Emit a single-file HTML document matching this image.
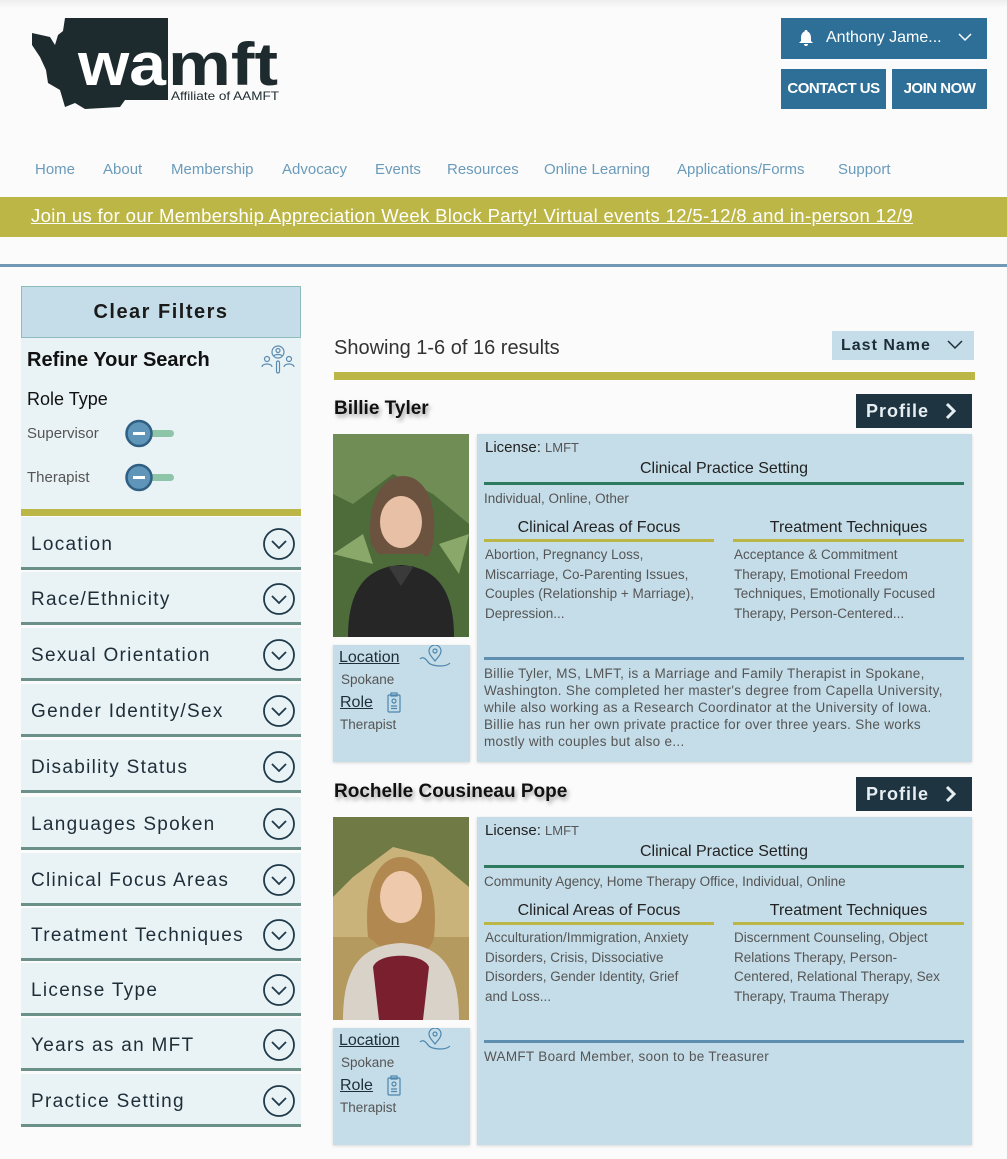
<!DOCTYPE html>
<html><head><meta charset="utf-8"><style>
*{margin:0;padding:0;box-sizing:border-box}
body{width:1007px;height:1159px;background:#fbfbfb;font-family:"Liberation Sans",sans-serif;position:relative;overflow:hidden;color:#222}
.a{position:absolute;white-space:nowrap}
.nav{color:#6a9bbb;font-size:15px;top:161px}
.acc{position:absolute;left:21px;width:280px;height:53px;background:#e9f2f5;border-bottom:3px solid #6b9088}
.acc span{position:absolute;left:10px;top:17px;font-size:19px;letter-spacing:1.3px;color:#1e2e38}
.acc svg{position:absolute;left:241px;top:10px}
.panel{position:absolute;background:#c5dde8;box-shadow:0 1px 3px rgba(0,0,0,.15)}
.sm{font-size:13.5px;color:#555;line-height:19.6px}
.bio{font-size:13.5px;color:#555;line-height:17px;letter-spacing:.3px}
.h{font-size:16px;color:#222}
.prof{position:absolute;left:856px;width:116px;height:34px;background:#1f3441;color:#e6eef2;font-weight:bold;font-size:18px;letter-spacing:1px;padding:7px 0 0 10px}
.name{position:absolute;left:334px;font-size:19px;font-weight:bold;color:#111;text-shadow:2px 3px 4px rgba(0,0,0,.35)}
.lnk{text-decoration:underline;font-size:16px;color:#1e2e38}
</style></head><body>
<div class="a" style="left:0;top:0;width:1007px;height:8px;background:linear-gradient(#eee,#fbfbfb)"></div>
<svg class="a" style="left:30px;top:15px" width="260" height="97" viewBox="0 0 260 97">
<path d="M35 3 L138 3 L138 85 L95 85 L90 92 L55 94 L45 88 L35 92 L30 75 L18 68 L16 55 L10 42 L2 30 L2 18 L20 22 L25 30 L28 20 L33 16 Z" fill="#1d2a2e"/>
<text x="48" y="70" font-family="Liberation Sans" font-weight="bold" font-size="60" fill="#fff" textLength="88" lengthAdjust="spacingAndGlyphs">wa</text>
<text x="138" y="70" font-family="Liberation Sans" font-weight="bold" font-size="60" fill="#1d2a2e" textLength="110" lengthAdjust="spacingAndGlyphs">mft</text>
<text x="141" y="85" font-family="Liberation Sans" font-size="12" fill="#1d2a2e" textLength="108" lengthAdjust="spacingAndGlyphs">Affiliate of AAMFT</text>
</svg>
<div class="a" style="left:781px;top:18px;width:206px;height:41px;background:#2e6f97;color:#fff;font-size:16px;padding:11px 0 0 45px">Anthony Jame...</div>
<svg class="a" style="left:796px;top:28px" width="20" height="20" viewBox="0 0 20 20"><path d="M10 2a1.5 1.5 0 0 1 1.5 1.5C14 4.5 15 7 15 10v3l2 2H3l2-2v-3c0-3 1-5.5 3.5-6.5A1.5 1.5 0 0 1 10 2z M8 16h4a2 2 0 0 1-4 0z" fill="#fff"/></svg>
<svg class="a" style="left:957px;top:31px" width="16" height="12"><path d="M2 3l6 6 6-6" stroke="#fff" stroke-width="1.5" fill="none"/></svg>
<div class="a" style="left:781px;top:69px;width:105px;height:40px;background:#2e6f97;color:#fff;font-size:15px;font-weight:bold;text-align:center;line-height:40px;letter-spacing:-.5px">CONTACT US</div>
<div class="a" style="left:892px;top:69px;width:95px;height:40px;background:#2e6f97;color:#fff;font-size:15px;font-weight:bold;text-align:center;line-height:40px;letter-spacing:-.5px">JOIN NOW</div>
<div class="a nav" style="left:35px">Home</div>
<div class="a nav" style="left:103px">About</div>
<div class="a nav" style="left:171px">Membership</div>
<div class="a nav" style="left:282px">Advocacy</div>
<div class="a nav" style="left:375px">Events</div>
<div class="a nav" style="left:447px">Resources</div>
<div class="a nav" style="left:544px">Online Learning</div>
<div class="a nav" style="left:677px">Applications/Forms</div>
<div class="a nav" style="left:838px">Support</div>
<div class="a" style="left:0;top:197px;width:1007px;height:40px;background:#bcb646"></div>
<div class="a" style="left:31px;top:205px;color:#fff;font-size:18.5px;text-decoration:underline;letter-spacing:.35px">Join us for our Membership Appreciation Week Block Party! Virtual events 12/5-12/8 and in-person 12/9</div>
<div class="a" style="left:0;top:264px;width:1007px;height:3px;background:#7199b6"></div>
<div class="a" style="left:21px;top:286px;width:280px;height:52px;background:#c5dde8;border:1px solid #8fbcbc;text-align:center;font-size:20px;font-weight:bold;letter-spacing:1.5px;line-height:50px;color:#1a1a1a">Clear Filters</div>
<div class="a" style="left:21px;top:338px;width:280px;height:172px;background:#e9f2f5"></div>
<div class="a" style="left:27px;top:349px;font-size:20px;font-weight:bold;color:#111">Refine Your Search</div>
<svg class="a" style="left:261px;top:344px" width="34" height="32" viewBox="0 0 34 32" fill="none" stroke="#5a8bb0" stroke-width="1.2"><circle cx="17" cy="8" r="6"/><circle cx="17" cy="6.5" r="2"/><path d="M13 12c1-2 7-2 8 0"/><circle cx="6" cy="15" r="2.5"/><path d="M1 23c0-4 10-4 10 0"/><circle cx="28" cy="15" r="2.5"/><path d="M23 23c0-4 10-4 10 0"/><rect x="15.5" y="17" width="3" height="12" rx="1.5"/></svg>
<div class="a" style="left:27px;top:389px;font-size:18px;color:#111">Role Type</div>
<div class="a" style="left:27px;top:425px;font-size:15px;color:#555">Supervisor</div>
<div class="a" style="left:27px;top:469px;font-size:15px;color:#555">Therapist</div>
<svg class="a" style="left:124px;top:419px" width="52" height="30"><rect x="14" y="11" width="36" height="7" rx="3.5" fill="#8ec4a7"/><circle cx="15" cy="14.5" r="12.5" fill="#5f95b8" stroke="#2f5f82" stroke-width="2.5"/><rect x="9" y="13" width="12" height="3" fill="#fff"/></svg>
<svg class="a" style="left:124px;top:463px" width="52" height="30"><rect x="14" y="11" width="36" height="7" rx="3.5" fill="#8ec4a7"/><circle cx="15" cy="14.5" r="12.5" fill="#5f95b8" stroke="#2f5f82" stroke-width="2.5"/><rect x="9" y="13" width="12" height="3" fill="#fff"/></svg>
<div class="a" style="left:21px;top:509px;width:280px;height:7px;background:#bcb646"></div>

<div class="acc" style="top:517px"><span>Location</span><svg width="34" height="34"><circle cx="17" cy="17" r="15" fill="none" stroke="#1f3a4a" stroke-width="1.8"/><path d="M10 14l7 7 7-7" fill="none" stroke="#1f3a4a" stroke-width="1.8"/></svg></div>
<div class="acc" style="top:572px"><span>Race/Ethnicity</span><svg width="34" height="34"><circle cx="17" cy="17" r="15" fill="none" stroke="#1f3a4a" stroke-width="1.8"/><path d="M10 14l7 7 7-7" fill="none" stroke="#1f3a4a" stroke-width="1.8"/></svg></div>
<div class="acc" style="top:628px"><span>Sexual Orientation</span><svg width="34" height="34"><circle cx="17" cy="17" r="15" fill="none" stroke="#1f3a4a" stroke-width="1.8"/><path d="M10 14l7 7 7-7" fill="none" stroke="#1f3a4a" stroke-width="1.8"/></svg></div>
<div class="acc" style="top:684px"><span>Gender Identity/Sex</span><svg width="34" height="34"><circle cx="17" cy="17" r="15" fill="none" stroke="#1f3a4a" stroke-width="1.8"/><path d="M10 14l7 7 7-7" fill="none" stroke="#1f3a4a" stroke-width="1.8"/></svg></div>
<div class="acc" style="top:740px"><span>Disability Status</span><svg width="34" height="34"><circle cx="17" cy="17" r="15" fill="none" stroke="#1f3a4a" stroke-width="1.8"/><path d="M10 14l7 7 7-7" fill="none" stroke="#1f3a4a" stroke-width="1.8"/></svg></div>
<div class="acc" style="top:797px"><span>Languages Spoken</span><svg width="34" height="34"><circle cx="17" cy="17" r="15" fill="none" stroke="#1f3a4a" stroke-width="1.8"/><path d="M10 14l7 7 7-7" fill="none" stroke="#1f3a4a" stroke-width="1.8"/></svg></div>
<div class="acc" style="top:853px"><span>Clinical Focus Areas</span><svg width="34" height="34"><circle cx="17" cy="17" r="15" fill="none" stroke="#1f3a4a" stroke-width="1.8"/><path d="M10 14l7 7 7-7" fill="none" stroke="#1f3a4a" stroke-width="1.8"/></svg></div>
<div class="acc" style="top:908px"><span>Treatment Techniques</span><svg width="34" height="34"><circle cx="17" cy="17" r="15" fill="none" stroke="#1f3a4a" stroke-width="1.8"/><path d="M10 14l7 7 7-7" fill="none" stroke="#1f3a4a" stroke-width="1.8"/></svg></div>
<div class="acc" style="top:963px"><span>License Type</span><svg width="34" height="34"><circle cx="17" cy="17" r="15" fill="none" stroke="#1f3a4a" stroke-width="1.8"/><path d="M10 14l7 7 7-7" fill="none" stroke="#1f3a4a" stroke-width="1.8"/></svg></div>
<div class="acc" style="top:1018px"><span>Years as an MFT</span><svg width="34" height="34"><circle cx="17" cy="17" r="15" fill="none" stroke="#1f3a4a" stroke-width="1.8"/><path d="M10 14l7 7 7-7" fill="none" stroke="#1f3a4a" stroke-width="1.8"/></svg></div>
<div class="acc" style="top:1074px"><span>Practice Setting</span><svg width="34" height="34"><circle cx="17" cy="17" r="15" fill="none" stroke="#1f3a4a" stroke-width="1.8"/><path d="M10 14l7 7 7-7" fill="none" stroke="#1f3a4a" stroke-width="1.8"/></svg></div>

<div class="a" style="left:334px;top:337px;font-size:20px;color:#333">Showing 1-6 of 16 results</div>
<div class="a" style="left:832px;top:331px;width:142px;height:29px;background:#c5dde8;font-size:16px;font-weight:bold;letter-spacing:1px;color:#1e2e38;padding:6px 0 0 9px">Last Name</div>
<svg class="a" style="left:946px;top:338px" width="18" height="14"><path d="M2 3l7 7 7-7" stroke="#1e2e38" stroke-width="1.5" fill="none"/></svg>
<div class="a" style="left:334px;top:372px;width:641px;height:8px;background:#bcb646"></div>

<div class="name" style="top:398px">Billie Tyler</div>
<div class="prof" style="top:394px">Profile</div>
<svg class="a" style="left:944px;top:402px" width="14" height="18"><path d="M3 2l7 7-7 7" stroke="#e6eef2" stroke-width="3" fill="none"/></svg>
<svg class="a" style="left:333px;top:434px" width="136" height="203" viewBox="0 0 136 203">
<rect width="136" height="203" fill="#4e6b3a"/><path d="M0 0h136v90L100 60 60 40 20 70 0 60z" fill="#6f8d55"/><path d="M0 120l30-20 10 30z M136 100l-30 10 20 30z" fill="#8aa86a"/>
<path d="M38 110c-5-40 10-68 32-68s36 28 30 68c-5 20-10 10-10 10H45z" fill="#6b5340"/>
<ellipse cx="68" cy="88" rx="21" ry="26" fill="#e8c0a5"/>
<path d="M15 203c0-50 20-70 53-72 33 2 53 22 53 72z" fill="#262626"/><path d="M55 132l13 20 13-20" fill="#3a3a3a"/>
</svg>
<div class="panel" style="left:333px;top:645px;width:137px;height:117px"></div>
<div class="a lnk" style="left:339px;top:649px">Location</div>
<svg class="a" style="left:418px;top:645px" width="34" height="24" fill="none" stroke="#4d86ad" stroke-width="1.2"><path d="M17 16c-4-5-6-7-6-10a6 6 0 0 1 12 0c0 3-2 5-6 10z"/><circle cx="17" cy="6" r="2"/><path d="M2 14c3-3 6 0 8 3s8 4 12 4 8-1 10-3"/></svg>
<div class="a sm" style="left:341px;top:670px">Spokane</div>
<div class="a lnk" style="left:340px;top:694px">Role</div>
<svg class="a" style="left:386px;top:692px" width="16" height="22" fill="none" stroke="#4d86ad" stroke-width="1.2"><rect x="2" y="3" width="12" height="17" rx="1"/><rect x="5" y="1" width="6" height="3"/><circle cx="8" cy="9" r="2"/><path d="M5 14h6M5 16.5h6"/></svg>
<div class="a sm" style="left:340px;top:715px">Therapist</div>
<div class="panel" style="left:477px;top:434px;width:495px;height:328px"></div>
<div class="a" style="left:485px;top:439px;font-size:15px;color:#222">License: <span style="font-size:13px;color:#555">LMFT</span></div>
<div class="a h" style="left:484px;width:480px;text-align:center;top:460px">Clinical Practice Setting</div>
<div class="a" style="left:484px;top:482px;width:480px;height:3px;background:#2e7a5e"></div>
<div class="a sm" style="left:484px;top:489px">Individual, Online, Other</div>
<div class="a h" style="left:484px;width:230px;text-align:center;top:519px">Clinical Areas of Focus</div>
<div class="a h" style="left:733px;width:231px;text-align:center;top:519px">Treatment Techniques</div>
<div class="a" style="left:484px;top:539px;width:230px;height:3px;background:#bcb646"></div>
<div class="a" style="left:733px;top:539px;width:231px;height:3px;background:#bcb646"></div>
<div class="a sm" style="left:485px;top:545px">Abortion, Pregnancy Loss,<br>Miscarriage, Co-Parenting Issues,<br>Couples (Relationship + Marriage),<br>Depression...</div>
<div class="a sm" style="left:734px;top:545px">Acceptance &amp; Commitment<br>Therapy, Emotional Freedom<br>Techniques, Emotionally Focused<br>Therapy, Person-Centered...</div>
<div class="a" style="left:484px;top:657px;width:480px;height:3px;background:#5f8fb0"></div>
<div class="a bio" style="left:484px;top:665px">Billie Tyler, MS, LMFT, is a Marriage and Family Therapist in Spokane,<br>Washington. She completed her master's degree from Capella University,<br>while also working as a Research Coordinator at the University of Iowa.<br>Billie has run her own private practice for over three years. She works<br>mostly with couples but also e...</div>

<div class="name" style="top:781px">Rochelle Cousineau Pope</div>
<div class="prof" style="top:777px">Profile</div>
<svg class="a" style="left:944px;top:785px" width="14" height="18"><path d="M3 2l7 7-7 7" stroke="#e6eef2" stroke-width="3" fill="none"/></svg>
<svg class="a" style="left:333px;top:817px" width="136" height="203" viewBox="0 0 136 203">
<rect width="136" height="203" fill="#c9b37a"/><path d="M0 0h136v70L100 40 60 30 20 60 0 80z" fill="#6f7a45"/><path d="M0 120h136v83H0z" fill="#b49a5e"/>
<path d="M35 120c-5-50 10-80 33-80s38 30 33 80c-5 20-15 10-15 10H48z" fill="#b08850"/>
<ellipse cx="68" cy="80" rx="21" ry="26" fill="#efc9ab"/>
<path d="M10 203c0-55 20-75 58-77 38 2 58 22 58 77z" fill="#d9d2c8"/><path d="M40 150c5-15 50-15 56 0l-6 53H46z" fill="#7a1f2e"/>
</svg>
<div class="panel" style="left:333px;top:1028px;width:137px;height:117px"></div>
<div class="a lnk" style="left:339px;top:1032px">Location</div>
<svg class="a" style="left:418px;top:1028px" width="34" height="24" fill="none" stroke="#4d86ad" stroke-width="1.2"><path d="M17 16c-4-5-6-7-6-10a6 6 0 0 1 12 0c0 3-2 5-6 10z"/><circle cx="17" cy="6" r="2"/><path d="M2 14c3-3 6 0 8 3s8 4 12 4 8-1 10-3"/></svg>
<div class="a sm" style="left:341px;top:1053px">Spokane</div>
<div class="a lnk" style="left:340px;top:1077px">Role</div>
<svg class="a" style="left:386px;top:1075px" width="16" height="22" fill="none" stroke="#4d86ad" stroke-width="1.2"><rect x="2" y="3" width="12" height="17" rx="1"/><rect x="5" y="1" width="6" height="3"/><circle cx="8" cy="9" r="2"/><path d="M5 14h6M5 16.5h6"/></svg>
<div class="a sm" style="left:340px;top:1098px">Therapist</div>
<div class="panel" style="left:477px;top:817px;width:495px;height:328px"></div>
<div class="a" style="left:485px;top:822px;font-size:15px;color:#222">License: <span style="font-size:13px;color:#555">LMFT</span></div>
<div class="a h" style="left:484px;width:480px;text-align:center;top:843px">Clinical Practice Setting</div>
<div class="a" style="left:484px;top:865px;width:480px;height:3px;background:#2e7a5e"></div>
<div class="a sm" style="left:484px;top:872px">Community Agency, Home Therapy Office, Individual, Online</div>
<div class="a h" style="left:484px;width:230px;text-align:center;top:902px">Clinical Areas of Focus</div>
<div class="a h" style="left:733px;width:231px;text-align:center;top:902px">Treatment Techniques</div>
<div class="a" style="left:484px;top:922px;width:230px;height:3px;background:#bcb646"></div>
<div class="a" style="left:733px;top:922px;width:231px;height:3px;background:#bcb646"></div>
<div class="a sm" style="left:485px;top:928px">Acculturation/Immigration, Anxiety<br>Disorders, Crisis, Dissociative<br>Disorders, Gender Identity, Grief<br>and Loss...</div>
<div class="a sm" style="left:734px;top:928px">Discernment Counseling, Object<br>Relations Therapy, Person-<br>Centered, Relational Therapy, Sex<br>Therapy, Trauma Therapy</div>
<div class="a" style="left:484px;top:1040px;width:480px;height:3px;background:#5f8fb0"></div>
<div class="a bio" style="left:484px;top:1048px">WAMFT Board Member, soon to be Treasurer</div>
</body></html>
